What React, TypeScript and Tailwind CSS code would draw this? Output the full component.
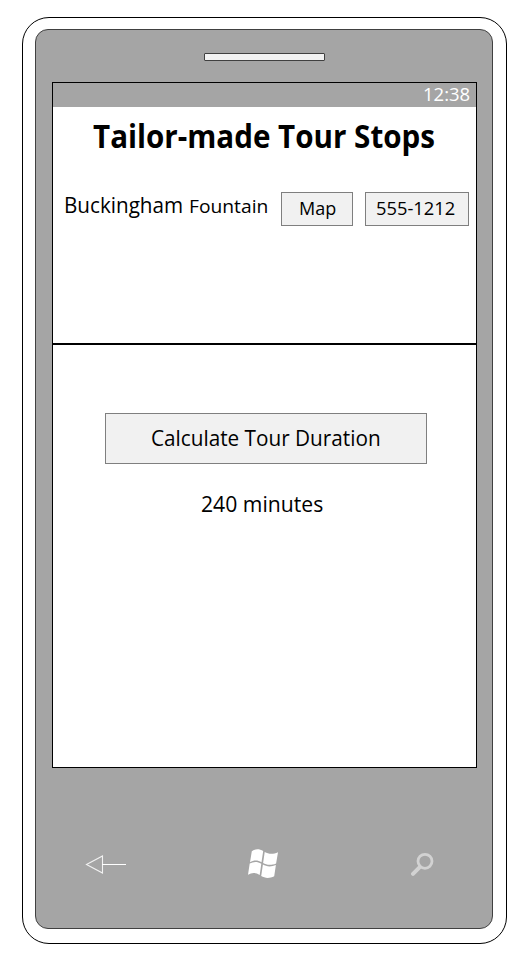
import { useLayoutEffect, useRef, useState } from "react";

type FitProps = { text: string; width: number; className?: string };

// Text condensed or widened horizontally to fill exactly the given width.
function Fit({ text, width, className = "" }: FitProps) {
  const ref = useRef<HTMLSpanElement>(null);
  const [scale, setScale] = useState(1);
  useLayoutEffect(() => {
    if (ref.current) setScale(width / ref.current.offsetWidth);
  }, [text, width]);
  return (
    <span className={`block shrink-0 whitespace-nowrap ${className}`} style={{ width }}>
      <span ref={ref} className="inline-block origin-left" style={{ transform: `scaleX(${scale})` }}>
        {text}
      </span>
    </span>
  );
}

function BackIcon() {
  return (
    <svg width="42" height="20" viewBox="0 0 42 20" fill="none" stroke="#fff">
      <path d="M1.5 10.5 17.5 2v17z" strokeWidth="1.1" opacity=".85" />
      <path d="M17 10.5h24" />
    </svg>
  );
}

function WindowsIcon() {
  return (
    <svg width="32" height="32" viewBox="0 0 32 32" fill="#fff">
      <path d="M4.8 3.2C8.3.6 12.5.8 16.2 3.1L14.5 14.2C10.8 12 6.8 11.9 3 14.2z" />
      <path d="M17.7 4C21.6 6.3 26.2 6.4 31 4.3L29.1 15.4C24.7 17.5 19.6 17.3 16.1 15.1z" />
      <path d="M2.7 15.6C6.5 13.4 10.5 13.5 14.3 15.7L12.7 27.1C9 24.6 5 24.4 1 26.7z" />
      <path d="M15.9 16.6C19.5 18.8 24.4 19 28.9 17L27.2 28.3C22.7 30.6 17.8 30.4 14.2 28.1z" />
    </svg>
  );
}

function SearchIcon() {
  return (
    <svg width="24" height="24" viewBox="0 0 24 24" fill="none" stroke="#d2d2d2" strokeLinecap="round">
      <circle cx="15" cy="9.3" r="7" strokeWidth="2.8" />
      <path d="M9.5 15.3 3 21.8" strokeWidth="4" />
    </svg>
  );
}

export default function App() {
  return (
    <div className="h-[962px] w-[527px] bg-white pt-[17px] pl-[22px] font-['Open_Sans',sans-serif] text-black">
      <div className="h-[927px] w-[485px] rounded-[27px] border border-black bg-white pt-[11px] pl-[12px]">
        <div className="flex h-[900px] w-[458px] flex-col rounded-[13px] border border-[#404040] bg-[#a5a5a5]">
          <div className="mt-[23px] ml-[168px] h-2 w-[121px] rounded-[1px] border border-[#404040] bg-[#f2f2f2]" />

          <main className="mt-[21px] ml-4 flex h-[686px] w-[425px] flex-col border border-black bg-white">
            <header className="flex h-6 items-center justify-end bg-[#a5a5a5] pr-[6px] pb-0.5 text-[18.5px] leading-[22px] text-white">
              <Fit text="12:38" width={47} />
            </header>

            <section className="h-[236px]">
              <h1 className="pt-[9px] pl-[40px] text-[32px] leading-10 font-bold">
                <Fit text="Tailor-made Tour Stops" width={342} />
              </h1>
              <div className="mt-9 flex h-[34px] items-center pl-[11px]">
                <div className="flex w-[217px] items-baseline gap-[6px] pb-[7px] leading-7">
                  <Fit text="Buckingham" width={119} className="text-[21px]" />
                  <Fit text="Fountain" width={79} className="text-[19px]" />
                </div>
                <button className="flex h-[34px] w-[72px] items-center justify-center border border-[#7f7f7f] bg-[#f1f1f1] pb-0.5 text-[19px] leading-7">
                  <Fit text="Map" width={37} />
                </button>
                <button className="ml-3 flex h-[34px] w-[104px] items-center justify-center border border-[#7f7f7f] bg-[#f1f1f1] pr-[3px] pb-0.5 text-[19px] leading-7">
                  <Fit text="555-1212" width={79} />
                </button>
              </div>
            </section>

            <section className="flex flex-col border-t-2 border-black pt-[68px]">
              <button className="ml-[52px] flex h-[51px] w-[322px] items-center justify-center border border-[#7f7f7f] bg-[#f1f1f1] pr-px pb-px text-[21px] leading-7">
                <Fit text="Calculate Tour Duration" width={230} />
              </button>
              <p className="mt-[26px] ml-[148px] text-[21px] leading-7">
                <Fit text="240 minutes" width={122} />
              </p>
            </section>
          </main>

          <nav className="mt-[80px] flex h-8 items-center justify-between pr-[58px] pl-[49px]">
            <BackIcon />
            <div className="pr-[11px]"><WindowsIcon /></div>
            <SearchIcon />
          </nav>
        </div>
      </div>
    </div>
  );
}
